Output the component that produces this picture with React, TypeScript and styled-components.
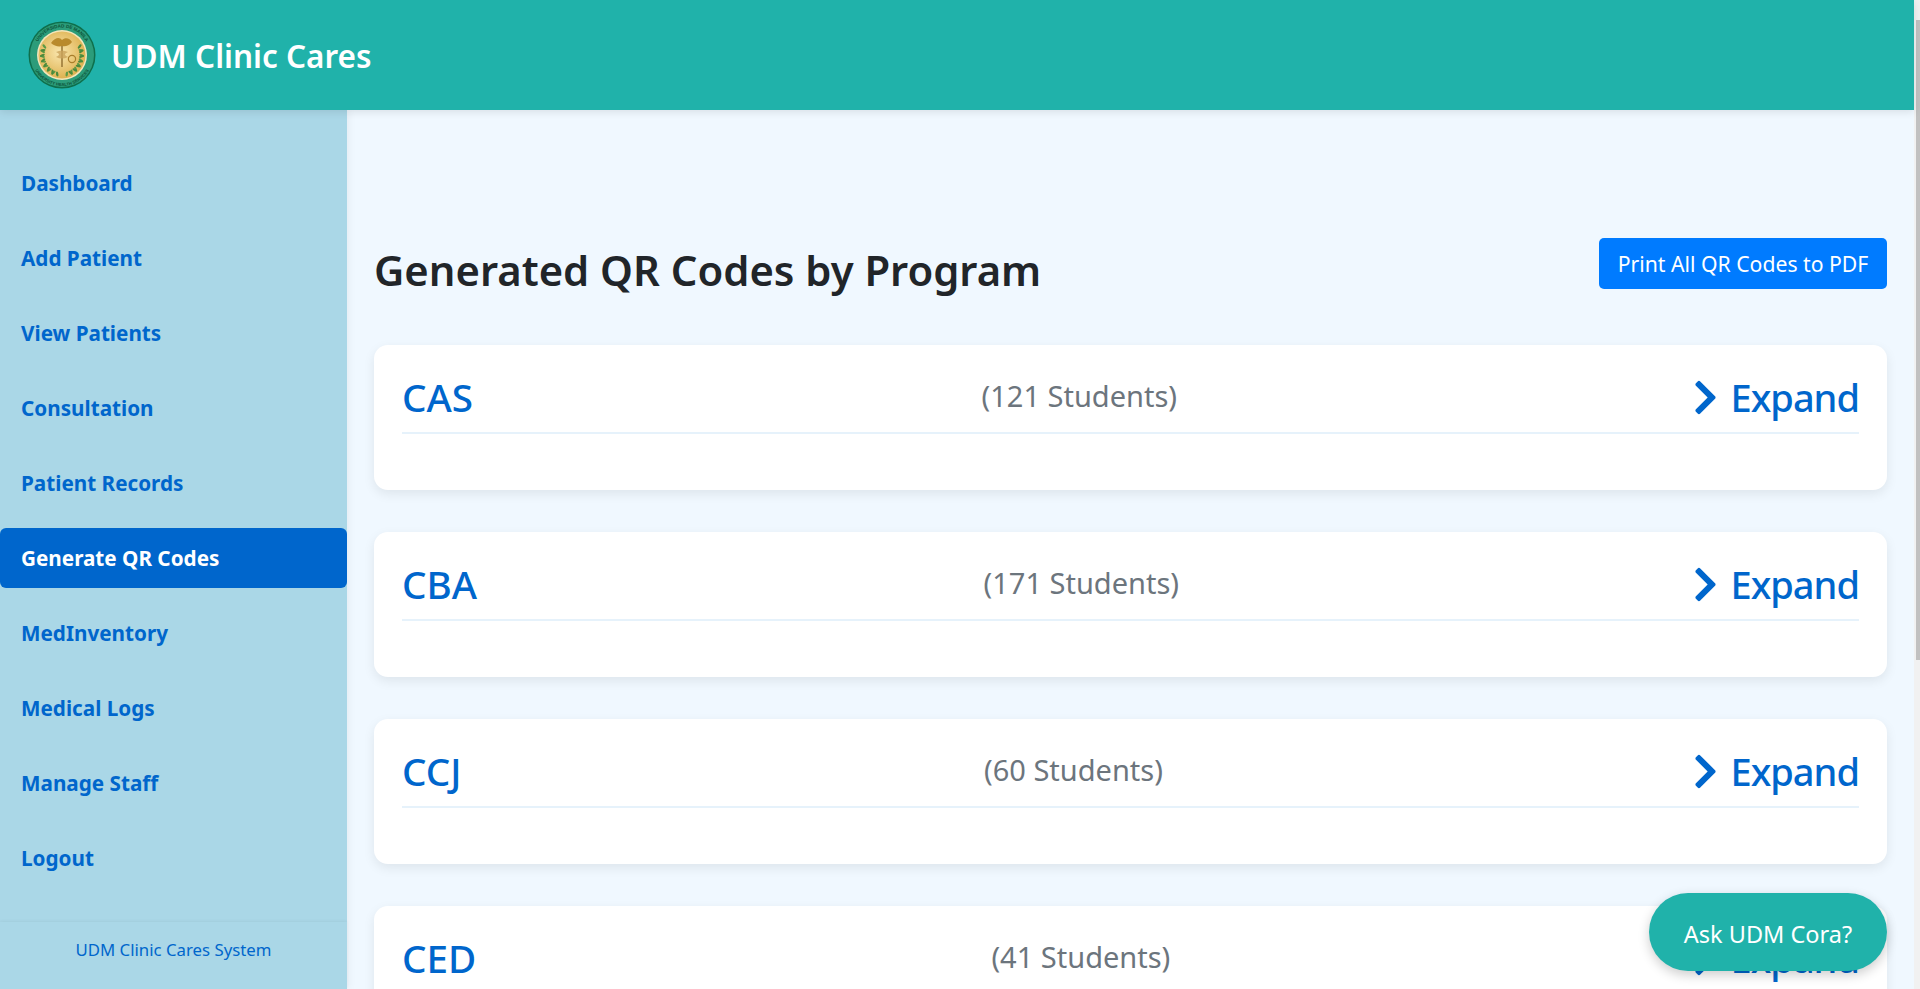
import React from 'react';
import styled, { createGlobalStyle } from 'styled-components';
import { FaChevronRight } from 'react-icons/fa';

const teal = '#20b2aa';
const linkBlue = '#0066cc';
const fontStack = '"Noto Sans", "Open Sans", "Liberation Sans", sans-serif';

const GlobalStyle = createGlobalStyle`
  * {
    box-sizing: border-box;
  }

  html,
  body {
    margin: 0;
    height: 100%;
    overflow: hidden;
    font-family: ${fontStack};
  }
`;

const Page = styled.div`
  height: 989px;
  display: flex;
  position: relative;
  overflow: hidden;
`;

const Content = styled.div`
  flex: 1;
  min-width: 0;
  display: flex;
  flex-direction: column;
`;

// the browser hides native scrollbars in the shot, so the bar is drawn
const ScrollRail = styled.div`
  width: 6px;
  flex-shrink: 0;
  padding: 20px 0 0 2px;
  background-color: #f1f1f1;
`;

const ScrollThumb = styled.div`
  height: 640px;
  background-color: #c1c1c1;
`;

const Header = styled.header`
  height: 110px;
  flex-shrink: 0;
  position: relative;
  z-index: 2;
  background-color: ${teal};
  display: flex;
  align-items: center;
  padding-left: 28px;
  gap: 15px;
  box-shadow: 0 2px 8px rgba(0, 0, 0, 0.1);
`;

const Brand = styled.h1`
  margin: 0;
  color: white;
  font-size: 31.5px;
  font-weight: 600;
`;

const Body = styled.div`
  flex: 1;
  min-height: 0;
  display: flex;
`;

const Sidebar = styled.aside`
  width: 347px;
  flex-shrink: 0;
  position: relative;
  z-index: 1;
  background-color: #aad7e7;
  display: flex;
  flex-direction: column;
  box-shadow: 2px 0 8px rgba(0, 0, 0, 0.05);
`;

const Nav = styled.nav`
  flex: 1;
  padding-top: 43px;
  display: flex;
  flex-direction: column;
  gap: 15px;
`;

const NavItem = styled.a<{ $active?: boolean }>`
  height: 60px;
  flex-shrink: 0;
  display: flex;
  align-items: center;
  padding-left: 21px;
  border-radius: 6px;
  font-size: 20.7px;
  font-weight: 700;
  color: ${({ $active }) => ($active ? 'white' : linkBlue)};
  background-color: ${({ $active }) => ($active ? linkBlue : 'transparent')};
`;

const SidebarFooter = styled.div`
  height: 67px;
  display: flex;
  align-items: center;
  justify-content: center;
  padding-bottom: 12px;
  font-size: 16.8px;
  color: ${linkBlue};
  box-shadow: 0 -1px 3px rgba(0, 0, 0, 0.05);
`;

const Main = styled.main`
  flex: 1;
  min-width: 0;
  overflow: hidden;
  background-color: #f0f8ff;
  padding: 128px 27px 0;
`;

const TitleRow = styled.div`
  display: flex;
  justify-content: space-between;
  align-items: flex-start;
  margin-bottom: 43px;
`;

const Title = styled.h2`
  margin: 0;
  font-size: 41.8px;
  font-weight: 600;
  line-height: 64px;
  color: #212529;
`;

const PrintButton = styled.button`
  height: 51px;
  width: 288px;
  border: none;
  border-radius: 5px;
  background-color: #007bff;
  color: white;
  font-family: inherit;
  font-size: 21.2px;
`;

const Card = styled.section`
  height: 145px;
  margin-bottom: 42px;
  padding: 20px 28px 0;
  background-color: white;
  border-radius: 14px;
  box-shadow: 0 4px 12px rgba(0, 0, 0, 0.08);
`;

const CardHeader = styled.div`
  height: 69px;
  padding-bottom: 3px;
  display: flex;
  justify-content: space-between;
  align-items: center;
  border-bottom: 2px solid #e6f2fb;
`;

const ProgramName = styled.span`
  font-size: 38.6px;
  font-weight: 500;
  color: ${linkBlue};
`;

const StudentCount = styled.span`
  font-size: 29px;
  margin-bottom: 4px;
  color: #6c757d;
`;

const ExpandToggle = styled.span`
  display: flex;
  align-items: center;
  gap: 6px;
  font-size: 38px;
  font-weight: 500;
  letter-spacing: -1px;
  color: ${linkBlue};
`;

const AskButton = styled.button`
  position: absolute;
  right: 33px;
  bottom: 18px;
  width: 238px;
  height: 78px;
  padding-top: 5px;
  border: none;
  border-radius: 39px;
  background-color: ${teal};
  color: white;
  font-family: inherit;
  font-size: 23.5px;
  box-shadow: 0 4px 12px rgba(0, 0, 0, 0.2);
  z-index: 3;
`;

const navLinks = [
  'Dashboard',
  'Add Patient',
  'View Patients',
  'Consultation',
  'Patient Records',
  'Generate QR Codes',
  'MedInventory',
  'Medical Logs',
  'Manage Staff',
  'Logout',
];

const programs = [
  { name: 'CAS', students: 121 },
  { name: 'CBA', students: 171 },
  { name: 'CCJ', students: 60 },
  { name: 'CED', students: 41 },
];

const leafAngles = [
  -160, -145, -130, -115, -100, -85, -70, 70, 85, 100, 115, 130, 145, 160,
];

const Seal = () => (
  <svg width="68" height="68" viewBox="0 0 68 68" aria-hidden="true">
    <defs>
      <radialGradient id="sealGold" cx="45%" cy="45%" r="60%">
        <stop offset="0%" stopColor="#f9e6ad" />
        <stop offset="100%" stopColor="#dcae4a" />
      </radialGradient>
      <path id="sealTop" d="M6.5 34a27.5 27.5 0 0 1 55 0" />
      <path id="sealBottom" d="M3 34a31 31 0 0 0 62 0" />
    </defs>
    <circle cx="34" cy="34" r="33.5" fill="#0e6f4c" />
    <circle cx="34" cy="34" r="32" fill="#2c9c7a" />
    <circle cx="34" cy="34" r="25" fill="#f3e6bb" />
    <circle cx="34" cy="34" r="23.5" fill="url(#sealGold)" />
    <text fontSize="4.6" fontWeight="700" fill="#0b5239" fontFamily="Liberation Sans, sans-serif">
      <textPath href="#sealTop" startOffset="50%" textAnchor="middle">
        UNIVERSIDAD DE MANILA
      </textPath>
    </text>
    <text fontSize="4.2" fontWeight="700" fill="#0b5239" fontFamily="Liberation Sans, sans-serif">
      <textPath href="#sealBottom" startOffset="50%" textAnchor="middle">
        UNIVERSITY HEALTH SERVICES
      </textPath>
    </text>
    {leafAngles.map((angle) => (
      <g key={angle} transform={`rotate(${angle} 34 34)`}>
        <ellipse cx="32" cy="14.5" rx="1.2" ry="2.6" fill="#4c8a3c" transform="rotate(-30 32 14.5)" />
        <ellipse cx="36" cy="14.5" rx="1.2" ry="2.6" fill="#5d9a45" transform="rotate(30 36 14.5)" />
      </g>
    ))}
    <path d="M23 22c4-6 9-6 11-3 3-3 8-2 10 2-3 4-7 5-10 4-3 1-8 0-11-3z" fill="#b98a2c" />
    <path d="M33.2 25h1.6v21h-1.6z" fill="#9b7a3a" />
    <path d="M28 31c4-2 8-2 12 0-4 2-4 3 0 5-4 2-8 2-12 0 4-2 4-3 0-5z" fill="#c9a25a" opacity="0.8" />
    <circle cx="44" cy="38" r="3.6" fill="none" stroke="#a87d2a" strokeWidth="1.2" />
  </svg>
);

const App = () => (
  <Page>
    <GlobalStyle />
    <Content>
      <Header>
        <Seal />
        <Brand>UDM Clinic Cares</Brand>
      </Header>
      <Body>
        <Sidebar>
          <Nav>
            {navLinks.map((link) => (
              <NavItem key={link} $active={link === 'Generate QR Codes'}>
                {link}
              </NavItem>
            ))}
          </Nav>
          <SidebarFooter>UDM Clinic Cares System</SidebarFooter>
        </Sidebar>
        <Main>
          <TitleRow>
            <Title>Generated QR Codes by Program</Title>
            <PrintButton>Print All QR Codes to PDF</PrintButton>
          </TitleRow>
          {programs.map((program) => (
            <Card key={program.name}>
              <CardHeader>
                <ProgramName>{program.name}</ProgramName>
                <StudentCount>({program.students} Students)</StudentCount>
                <ExpandToggle>
                  <FaChevronRight size={39} />
                  Expand
                </ExpandToggle>
              </CardHeader>
            </Card>
          ))}
        </Main>
      </Body>
    </Content>
    <ScrollRail>
      <ScrollThumb />
    </ScrollRail>
    <AskButton>Ask UDM Cora?</AskButton>
  </Page>
);

export default App;
